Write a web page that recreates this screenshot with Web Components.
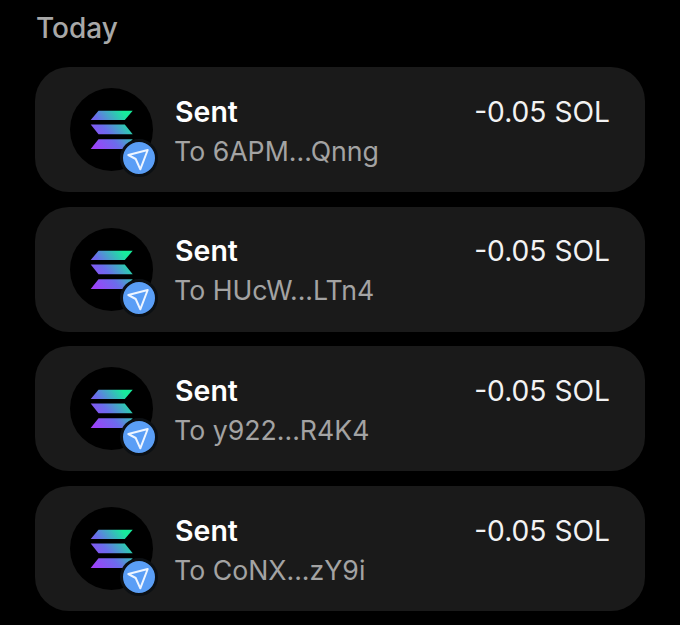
<!DOCTYPE html>
<html>
<head>
<meta charset="utf-8">
<style>
  html, body { margin: 0; background: #000; }
  body { font-family: Inter, "Liberation Sans", sans-serif; overflow: hidden; }
</style>
</head>
<body>
<tx-list heading="Today">
  <tx-row to="To 6APM...Qnng" amount="-0.05 SOL"></tx-row>
  <tx-row to="To HUcW...LTn4" amount="-0.05 SOL"></tx-row>
  <tx-row to="To y922...R4K4" amount="-0.05 SOL"></tx-row>
  <tx-row to="To CoNX...zY9i" amount="-0.05 SOL"></tx-row>
</tx-list>

<script>
class TxList extends HTMLElement {
  constructor() {
    super();
    const shadow = this.attachShadow({ mode: 'open' });
    shadow.innerHTML = `
      <style>
      :host { display: block; padding: 12px 35px 0; }
      h2 {
        margin: 0 0 22px 1px;
        height: 33px;
        line-height: 33px;
        font-size: 28px;
        font-weight: 550;
        color: #a8a8a8;
      }
      #rows { display: flex; flex-direction: column; gap: 14.7px; }
      </style>
      <h2></h2>
      <div id='rows'><slot></slot></div>
    `;
    shadow.querySelector('h2').textContent = this.getAttribute('heading');
  }
}
customElements.define('tx-list', TxList);

class TokenIcon extends HTMLElement {
  constructor() {
    super();
    const shadow = this.attachShadow({ mode: 'open' });
    const id = 'g' + Math.random().toString(36).slice(2);
    shadow.innerHTML = `
      <style>
      :host { display: block; position: relative; width: 83px; height: 83px; flex: none; }
      #coin { display: block; width: 83px; height: 83px; }
      #badge {
        position: absolute;
        left: 49.700px;
        top: 51px;
        width: 32px;
        height: 32px;
        border: 3px solid #0c1014;
        border-radius: 50%;
        background: #5a9ef6;
      }
      #badge svg { display: block; width: 32px; height: 32px; }
      </style>
      <svg id='coin' viewBox='0 0 83 83'>
        <defs>
          <linearGradient id='${id}' gradientUnits='userSpaceOnUse' x1='22' y1='58' x2='58' y2='30'>
            <stop offset='0' stop-color='#a040fa'/>
            <stop offset='0.45' stop-color='#6b6cec'/>
            <stop offset='1' stop-color='#17ec9c'/>
          </linearGradient>
        </defs>
        <circle cx='41.5' cy='41.5' r='41.5' fill='#000'/>
        <path fill='url(#${id})' d='M28.500 22.800 H62.700 L54.800 32 H20.700 Z'/>
        <path fill='url(#${id})' d='M20.700 36.500 H54.800 L62.700 46.300 H28.500 Z'/>
        <path fill='url(#${id})' d='M28.500 51.300 H62.700 L54.800 61 H20.700 Z'/>
      </svg>
      <div id='badge'>
        <svg viewBox='0 0 32 32' fill='none' stroke='#eef5ff' stroke-width='2' stroke-linejoin='round'>
          <path d='M5.300 13 L24.700 8 L17.300 27.300 L12.700 17 Z'/>
        </svg>
      </div>
    `;
  }
}
customElements.define('token-icon', TokenIcon);

class TxRow extends HTMLElement {
  constructor() {
    super();
    const shadow = this.attachShadow({ mode: 'open' });
    shadow.innerHTML = `
      <style>
      :host {
        display: flex;
        align-items: center;
        height: 125px;
        box-sizing: border-box;
        padding: 0 35px;
        background: #1a1a1a;
        border-radius: 34px;
      }
      #text { flex: 1; margin-left: 22px; padding-top: 3px; display: flex; flex-direction: column; gap: 7px; }
      #top { display: flex; justify-content: space-between; align-items: center; }
      #title { font-size: 28.500px; line-height: 32px; font-weight: 600; color: #fff; }
      #amount { font-size: 28.200px; line-height: 32px; color: #f2f2f2; }
      #to { font-size: 26.700px; line-height: 32px; color: #a3a3a3; margin-left: -1px; }
      </style>
      <token-icon></token-icon>
      <div id='text'>
        <div id='top'><span id='title'>Sent</span><span id='amount'></span></div>
        <div id='to'></div>
      </div>
    `;
    shadow.getElementById('to').textContent = this.getAttribute('to');
    shadow.getElementById('amount').textContent = this.getAttribute('amount');
  }
}
customElements.define('tx-row', TxRow);
</script>
</body>
</html>
